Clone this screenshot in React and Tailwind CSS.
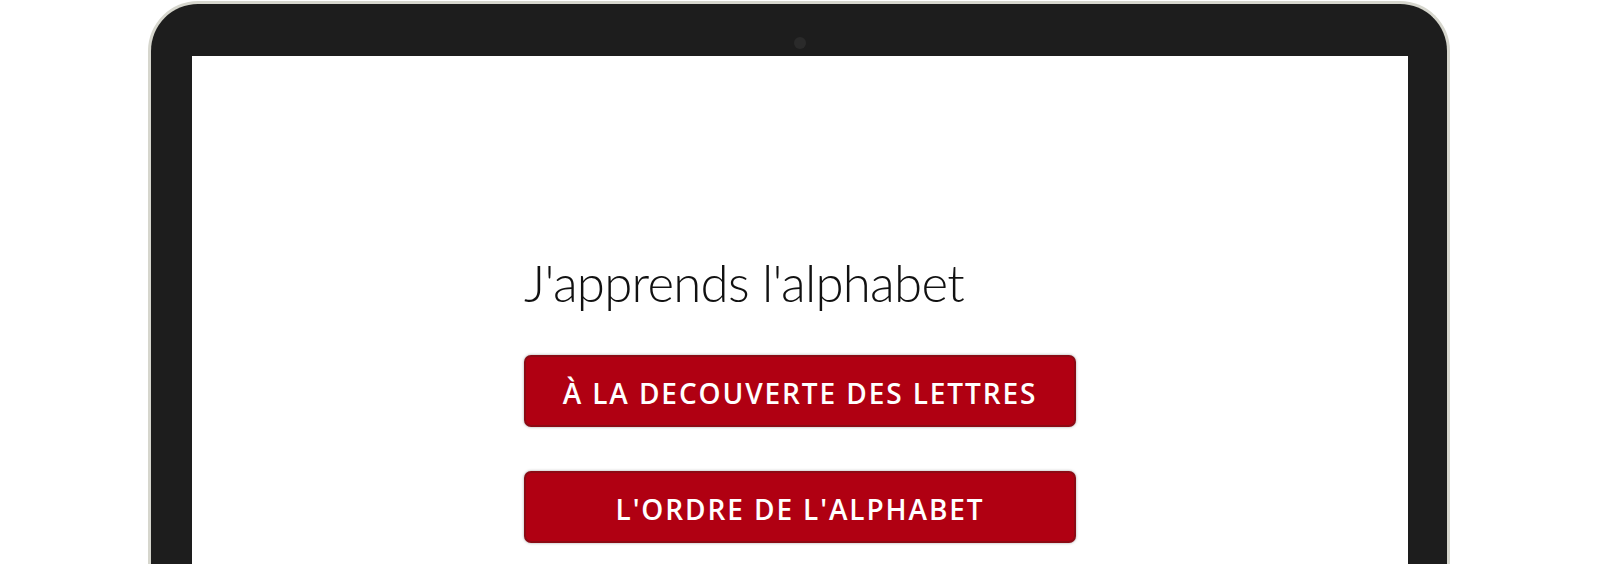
import React from "react";

const Button = ({ label }) => (
  <button
    type="button"
    className="w-full h-[72px] flex items-center justify-center pt-[4px] rounded-[7px] border-2 border-[#8c0a14] bg-[#b00012] text-white text-[28px] font-semibold tracking-[1.9px] shadow-[0_0_3px_rgba(0,0,0,0.35)]"
    style={{ fontFamily: '"Open Sans", "Noto Sans", sans-serif' }}
  >
    {label}
  </button>
);

const App = () => {
  return (
    <div className="w-[1600px] h-[564px] overflow-hidden bg-white">
      <div className="ml-[148px] mt-[1px] w-[1302px] h-[620px] rounded-t-[50px] border-[3px] border-b-0 border-[#d6d6cd] bg-[#1d1d1d] pl-[41px] pr-[39px] pt-[52px]">
        <div className="relative h-full bg-white">
          <div className="absolute left-1/2 top-[-19px] h-[12px] w-[12px] -translate-x-1/2 rounded-full bg-[#2a2a2a]" />
          <div className="mx-auto w-[552px] pt-[197px]">
            <h1
              className="text-[51px] leading-[60px] font-light text-[#111] tracking-[-0.75px]"
              style={{ fontFamily: 'Lato, "Open Sans", sans-serif' }}
            >
              J'apprends l'alphabet
            </h1>
            <div className="mt-[42px] flex flex-col gap-[44px]">
              <Button label="À LA DECOUVERTE DES LETTRES" />
              <Button label="L'ORDRE DE L'ALPHABET" />
            </div>
          </div>
        </div>
      </div>
    </div>
  );
};

export default App;
